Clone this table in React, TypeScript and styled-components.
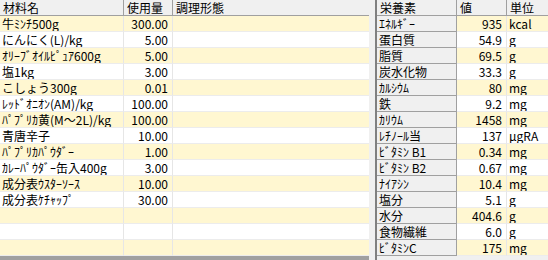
import React from "react"
import styled, { createGlobalStyle } from "styled-components"

const GlobalStyle = createGlobalStyle`
  html, body {
    margin: 0;
    padding: 0;
    background: #f0f0f0;
  }
  body {
    font-family: "Noto Sans CJK JP", "Liberation Sans", sans-serif;
    font-size: 12px;
    color: #000;
  }
`

type Ingredient = { name: string; amount: string; form?: string }
type Nutrient = { name: string; value: string; unit: string }

const ingredients: Ingredient[] = [
  { name: "牛ﾐﾝﾁ500g", amount: "300.00" },
  { name: "にんにく(L)/kg", amount: "5.00" },
  { name: "ｵﾘｰﾌﾞｵｲﾙﾋﾟｭｱ600g", amount: "5.00" },
  { name: "塩1kg", amount: "3.00" },
  { name: "こしょう300g", amount: "0.01" },
  { name: "ﾚｯﾄﾞｵﾆｵﾝ(AM)/kg", amount: "100.00" },
  { name: "ﾊﾟﾌﾟﾘｶ黄(M～2L)/kg", amount: "100.00" },
  { name: "青唐辛子", amount: "10.00" },
  { name: "ﾊﾟﾌﾟﾘｶﾊﾟｳﾀﾞｰ", amount: "1.00" },
  { name: "ｶﾚｰﾊﾟｳﾀﾞｰ缶入400g", amount: "3.00" },
  { name: "成分表ｳｽﾀｰｿｰｽ", amount: "10.00" },
  { name: "成分表ｹﾁｬｯﾌﾟ", amount: "30.00" },
  { name: "", amount: "" },
  { name: "", amount: "" },
  { name: "", amount: "" },
]

const nutrients: Nutrient[] = [
  { name: "ｴﾈﾙｷﾞｰ", value: "935", unit: "kcal" },
  { name: "蛋白質", value: "54.9", unit: "g" },
  { name: "脂質", value: "69.5", unit: "g" },
  { name: "炭水化物", value: "33.3", unit: "g" },
  { name: "ｶﾙｼｳﾑ", value: "80", unit: "mg" },
  { name: "鉄", value: "9.2", unit: "mg" },
  { name: "ｶﾘｳﾑ", value: "1458", unit: "mg" },
  { name: "ﾚﾁﾉｰﾙ当", value: "137", unit: "μgRA" },
  { name: "ﾋﾞﾀﾐﾝ B1", value: "0.34", unit: "mg" },
  { name: "ﾋﾞﾀﾐﾝ B2", value: "0.67", unit: "mg" },
  { name: "ﾅｲｱｼﾝ", value: "10.4", unit: "mg" },
  { name: "塩分", value: "5.1", unit: "g" },
  { name: "水分", value: "404.6", unit: "g" },
  { name: "食物繊維", value: "6.0", unit: "g" },
  { name: "ﾋﾞﾀﾐﾝC", value: "175", unit: "mg" },
]

export default function App() {
  return (
    <>
      <GlobalStyle />
      <Window>
        <IngredientGrid>
          <IngredientRow>
            <HeaderCell>材料名</HeaderCell>
            <HeaderCell>使用量</HeaderCell>
            <HeaderCell>調理形態</HeaderCell>
          </IngredientRow>
          {ingredients.map((item, i) => (
            <IngredientRow key={i} $striped={i % 2 === 0}>
              <Cell>{item.name}</Cell>
              <Cell $align="right">{item.amount}</Cell>
              <Cell>{item.form ?? ""}</Cell>
            </IngredientRow>
          ))}
          <ScrollEdge />
        </IngredientGrid>
        <Splitter />
        <NutrientGrid>
          <NutrientRow>
            <HeaderCell>栄養素</HeaderCell>
            <HeaderCell>値</HeaderCell>
            <HeaderCell>単位</HeaderCell>
          </NutrientRow>
          {nutrients.map((n, i) => (
            <NutrientRow key={n.name} $striped={i % 2 === 0}>
              <RowHeader>{n.name}</RowHeader>
              <Cell $align="right">{n.value}</Cell>
              <Cell>{n.unit}</Cell>
            </NutrientRow>
          ))}
        </NutrientGrid>
      </Window>
    </>
  )
}

const Window = styled.div`
  display: flex;
  width: 548px;
  height: 260px;
  overflow: hidden;
  background: #f0f0f0;
`

const IngredientGrid = styled.div`
  width: 369px;
  display: flex;
  flex-direction: column;
  background: #fff;
`

const ScrollEdge = styled.div`
  flex: 1;
  background: #a0a0a0;
`

const Splitter = styled.div`
  width: 6px;
  background: #f0f0f0;
  border-right: 2px solid #808080;
`

const NutrientGrid = styled.div`
  flex: 1;
  display: flex;
  flex-direction: column;
  background: #f0f0f0;
`

const rowBase = `
  display: grid;
  height: 16px;
  line-height: 15px;
  white-space: nowrap;
`

const IngredientRow = styled.div<{ $striped?: boolean }>`
  ${rowBase}
  grid-template-columns: 124px 49px 1fr;
  background: ${(p) => (p.$striped ? "#fff7d1" : "#ffffff")};
`

const NutrientRow = styled.div<{ $striped?: boolean }>`
  ${rowBase}
  grid-template-columns: 80px 50px 1fr;
  background: ${(p) => (p.$striped ? "#fff7d1" : "#ffffff")};
`

const HeaderCell = styled.div`
  background: #f0f0f0;
  border-right: 1px solid #a0a0a0;
  border-bottom: 1px solid #a0a0a0;
  padding: 0 3px;
  overflow: hidden;

  &:last-child {
    border-right: none;
  }
`

const Cell = styled.div<{ $align?: "left" | "right" }>`
  border-right: 1px solid #e6e6e6;
  border-bottom: 1px solid #ececec;
  padding: 0 4px 0 2px;
  text-align: ${(p) => p.$align ?? "left"};
  overflow: hidden;

  &:last-child {
    border-right: none;
  }
`

const RowHeader = styled.div`
  background: #f0f0f0;
  border-right: 1px solid #a0a0a0;
  border-bottom: 1px solid #a0a0a0;
  padding: 0 2px;
  overflow: hidden;
`
